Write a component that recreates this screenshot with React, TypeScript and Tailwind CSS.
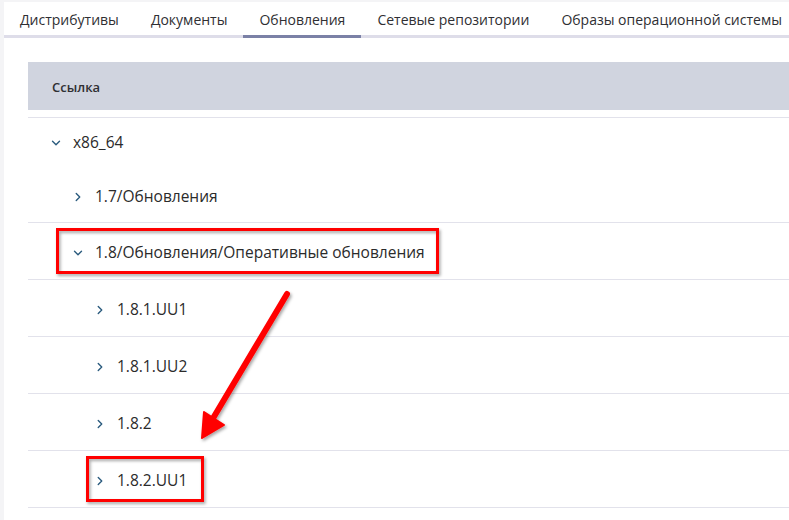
import { ChevronDown, ChevronRight } from 'lucide-react'

const tabs = [
  { label: 'Дистрибутивы', active: false },
  { label: 'Документы', active: false },
  { label: 'Обновления', active: true },
  { label: 'Сетевые репозитории', active: false },
  { label: 'Образы операционной системы', active: false },
]

const rows = [
  { label: '1.7/Обновления', level: 1, open: false },
  { label: '1.8/Обновления/Оперативные обновления', level: 1, open: true },
  { label: '1.8.1.UU1', level: 2, open: false },
  { label: '1.8.1.UU2', level: 2, open: false },
  { label: '1.8.2', level: 2, open: false },
  { label: '1.8.2.UU1', level: 2, open: false },
]

function Row({ label, level, open, height }: { label: string; level: number; open: boolean; height: string }) {
  const pad = level === 0 ? 'pl-[21px]' : level === 1 ? 'pl-[43px]' : 'pl-[65px]'
  return (
    <div className={`flex items-center pt-[4px] ${height} ${pad} border-b border-[#e2e2eb]`}>
      <span className="w-[24px] flex items-center text-[#2b5b7e]">
        {open ? <ChevronDown size={14} strokeWidth={2.4} /> : <ChevronRight size={14} strokeWidth={2.4} />}
      </span>
      <span className="text-[15.5px] text-[#2b2b2b]">{label}</span>
    </div>
  )
}

export default function App() {
  return (
    <div className="relative w-[789px] h-[520px] overflow-hidden bg-[#f4f4f6] pt-[2px] pl-[4px]" style={{ fontFamily: '"Open Sans", "Noto Sans", sans-serif' }}>
      <div className="h-full bg-white">
        {/* Tabs */}
        <div className="flex h-[36px] border-b-[3px] border-[#dedde9]">
          {tabs.map((tab) => (
            <div
              key={tab.label}
              className={`px-4 pt-[1px] flex items-center whitespace-nowrap text-[14px] text-[#2f2f33] ${tab.active ? 'border-b-[3px] border-[#7b81a6] -mb-[3px]' : ''}`}
            >
              {tab.label}
            </div>
          ))}
        </div>

        {/* Table */}
        <div className="pl-[24px] pt-[24px]">
          <div className="h-[48px] bg-[#d0d4df] pl-[24px] pt-[3px] flex items-center text-[13px] font-semibold text-[#2f2f33]">
            Ссылка
          </div>
          <div className="mt-[7px] border-t border-[#e2e2eb]">
            <div className="flex items-center h-[49px] pl-[21px]">
              <span className="w-[24px] flex items-center text-[#2b5b7e]">
                <ChevronDown size={14} strokeWidth={2.4} />
              </span>
              <span className="text-[15.5px] text-[#2b2b2b]">x86_64</span>
            </div>
            <Row {...rows[0]} height="h-[56px]" />
            {rows.slice(1).map((r) => (
              <Row key={r.label} {...r} height="h-[57px]" />
            ))}
          </div>
        </div>
      </div>

      {/* Annotations */}
      <svg className="absolute inset-0 pointer-events-none" width="789" height="520">
        <defs>
          <filter id="sh" x="-10%" y="-10%" width="120%" height="130%">
            <feDropShadow dx="1.5" dy="2" stdDeviation="1.5" floodColor="#000" floodOpacity="0.35" />
          </filter>
        </defs>
        <g filter="url(#sh)" fill="none" stroke="#ff0000" strokeWidth="3">
          <rect x="57.5" y="229.5" width="380" height="43" />
          <rect x="87.5" y="457.5" width="115" height="43" />
        </g>
        <g filter="url(#sh)">
          <line x1="287" y1="294" x2="212" y2="420" stroke="#ff0000" strokeWidth="6" strokeLinecap="round" />
          <polygon points="202,438 204,412 224,425" fill="#ff0000" stroke="#ff0000" strokeWidth="2" strokeLinejoin="round" />
        </g>
      </svg>
    </div>
  )
}
